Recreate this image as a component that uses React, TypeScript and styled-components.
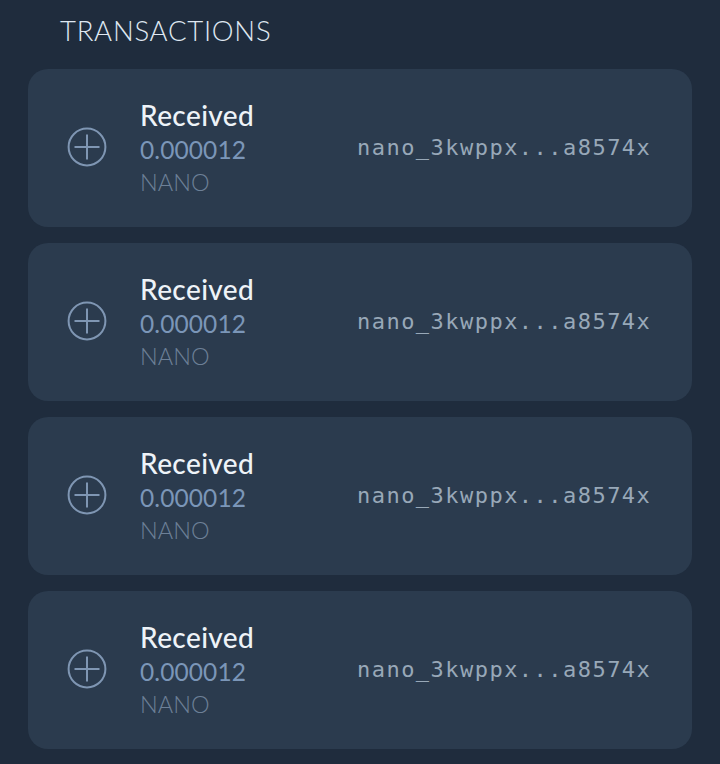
import styled, { createGlobalStyle } from 'styled-components'

const GlobalStyle = createGlobalStyle`
  html, body {
    margin: 0;
    padding: 0;
    background: #1f2c3d;
    font-family: "Lato", "Noto Sans", sans-serif;
  }
`

const transactions = [1, 2, 3, 4]

const App = () => (
  <Page>
    <GlobalStyle />
    <Title>TRANSACTIONS</Title>
    <List>
      {transactions.map((id) => (
        <Card key={id}>
          <PlusIcon viewBox="0 0 40 40">
            <circle cx="20" cy="20" r="18.4" />
            <path d="M20 7.5v25M7.5 20h25" />
          </PlusIcon>
          <Info>
            <Status>Received</Status>
            <Amount>0.000012</Amount>
            <Unit>NANO</Unit>
          </Info>
          <Address>nano_3kwppx...a8574x</Address>
        </Card>
      ))}
    </List>
  </Page>
)

const Page = styled.div`
  width: 720px;
  height: 764px;
  overflow: hidden;
  box-sizing: border-box;
  padding: 14px 28px 0;
  background: #1f2c3d;
`
const Title = styled.h1`
  margin: 0 0 21px 32px;
  font-size: 27.5px;
  line-height: 34px;
  font-weight: 300;
  letter-spacing: 0.75px;
  color: #dfe8f2;
`
const List = styled.div`
  display: flex;
  flex-direction: column;
  gap: 16px;
`
const Card = styled.div`
  display: flex;
  align-items: flex-start;
  height: 158px;
  box-sizing: border-box;
  padding: 0 39px;
  background: #2b3b4e;
  border-radius: 20px;
`
const PlusIcon = styled.svg`
  flex: none;
  width: 40px;
  height: 40px;
  margin-top: 58px;
  fill: none;
  stroke: #7f96b3;
  stroke-width: 2;
`
const Info = styled.div`
  width: 217px;
  margin: 29px 0 0 33px;
  flex: none;
`
const Status = styled.div`
  font-size: 28px;
  line-height: 34px;
  font-weight: 500;
  letter-spacing: 0.4px;
  color: #eef3f8;
`
const Amount = styled.div`
  margin-top: 2px;
  font-size: 24.5px;
  line-height: 32px;
  font-weight: 400;
  letter-spacing: 0.1px;
  color: #7b96b8;
`
const Unit = styled.div`
  font-size: 23.5px;
  line-height: 33px;
  font-weight: 300;
  color: #6d8097;
`
const Address = styled.div`
  margin-top: 64px;
  font-family: "DejaVu Sans Mono", "Liberation Mono", monospace;
  font-size: 22px;
  line-height: 30px;
  letter-spacing: 1.47px;
  white-space: nowrap;
  color: #98a8b8;
`

export default App
